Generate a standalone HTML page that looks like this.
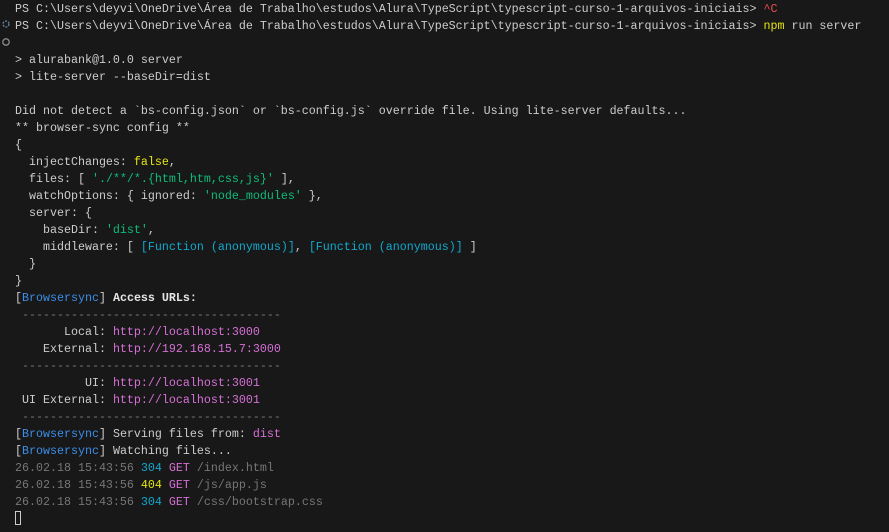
<!DOCTYPE html>
<html><head><meta charset="utf-8"><style>
html,body{margin:0;padding:0;background:#181818;width:889px;height:532px;overflow:hidden}
.t{position:absolute;left:15px;top:0.5px;font-family:"Liberation Mono",monospace;font-size:11.67px;line-height:17px;color:#cccccc;white-space:pre}
.g{color:#0dbc79}.c{color:#11a8cd}.b{color:#3b8eea}.m{color:#d670d6}.y{color:#e5e510}.r{color:#f14c4c}.d{color:#767676}
.w{font-weight:bold;color:#e5e5e5}
.cur{display:inline-block;width:6px;height:14px;border:1px solid #ccc;vertical-align:-3px;box-sizing:border-box}
</style></head><body>
<svg style="position:absolute;left:1px;top:18px" width="12" height="30" viewBox="0 0 12 30">
<circle cx="5" cy="6" r="3" fill="none" stroke="#6a8fb0" stroke-width="1.2" stroke-dasharray="2 1.2"/>
<circle cx="5" cy="24" r="3.2" fill="none" stroke="#8a8a8a" stroke-width="1.3"/>
</svg>
<div class="t">PS C:\Users\deyvi\OneDrive\Área de Trabalho\estudos\Alura\TypeScript\typescript-curso-1-arquivos-iniciais> <span class="r">^C</span>
PS C:\Users\deyvi\OneDrive\Área de Trabalho\estudos\Alura\TypeScript\typescript-curso-1-arquivos-iniciais> <span class="y">npm</span> run server

> alurabank@1.0.0 server
> lite-server --baseDir=dist

Did not detect a `bs-config.json` or `bs-config.js` override file. Using lite-server defaults...
** browser-sync config **
{
  injectChanges: <span class="y">false</span>,
  files: [ <span class="g">'./**/*.{html,htm,css,js}'</span> ],
  watchOptions: { ignored: <span class="g">'node_modules'</span> },
  server: {
    baseDir: <span class="g">'dist'</span>,
    middleware: [ <span class="c">[Function (anonymous)]</span>, <span class="c">[Function (anonymous)]</span> ]
  }
}
[<span class="b">Browsersync</span>] <span class="w">Access URLs:</span>
 <span class="d">-------------------------------------</span>
       Local: <span class="m">http://localhost:3000</span>
    External: <span class="m">http://192.168.15.7:3000</span>
 <span class="d">-------------------------------------</span>
          UI: <span class="m">http://localhost:3001</span>
 UI External: <span class="m">http://localhost:3001</span>
 <span class="d">-------------------------------------</span>
[<span class="b">Browsersync</span>] Serving files from: <span class="m">dist</span>
[<span class="b">Browsersync</span>] Watching files...
<span class="d">26.02.18 15:43:56</span> <span class="c">304</span> <span class="m">GET</span> <span class="d">/index.html</span>
<span class="d">26.02.18 15:43:56</span> <span class="y">404</span> <span class="m">GET</span> <span class="d">/js/app.js</span>
<span class="d">26.02.18 15:43:56</span> <span class="c">304</span> <span class="m">GET</span> <span class="d">/css/bootstrap.css</span>
<span class="cur"></span></div>
</body></html>
